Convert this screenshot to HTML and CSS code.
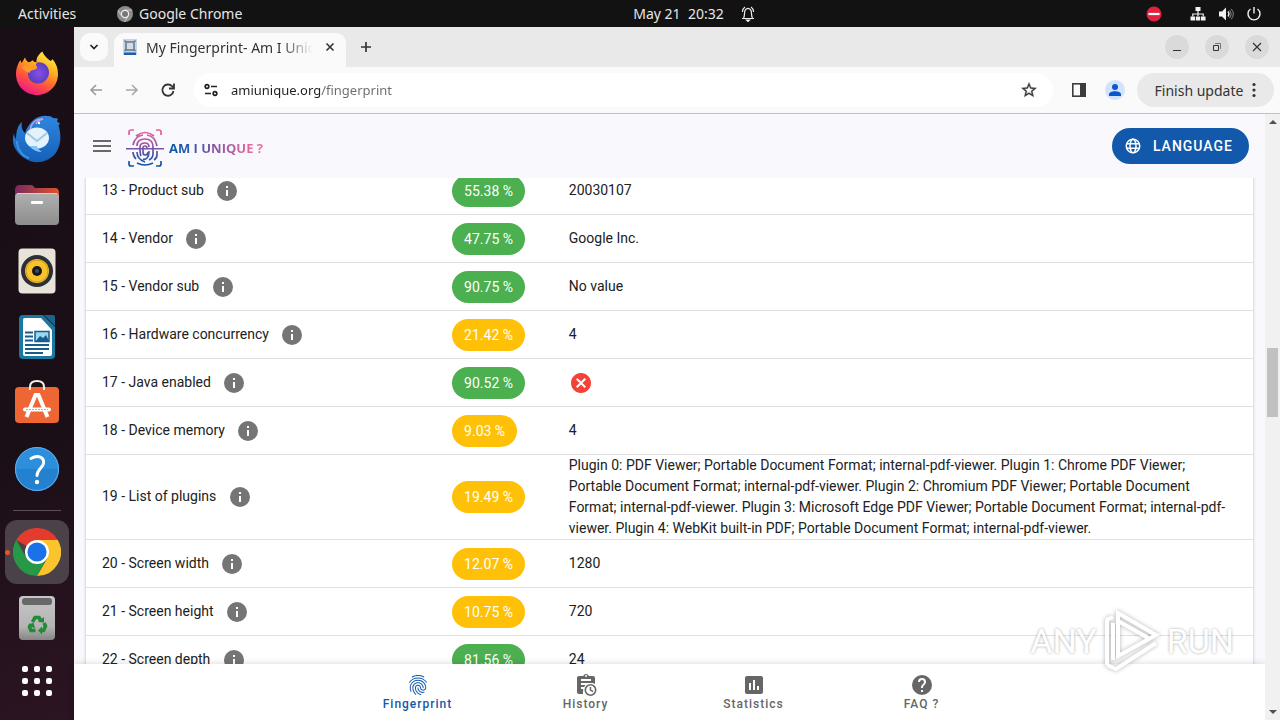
FILE: index.html
```html
<!DOCTYPE html>
<html lang="en">
<head>
<meta charset="utf-8">
<meta name="viewport" content="width=device-width, initial-scale=1">
<title>My Fingerprint- Am I Unique ?</title>
<link rel="stylesheet" href="styles.css">
</head>
<body>
<svg class="defs" aria-hidden="true">
  <defs>
    <symbol id="info" viewBox="0 0 24 24"><path d="M13 9h-2V7h2m0 10h-2v-6h2m-1-9A10 10 0 0 0 2 12a10 10 0 0 0 10 10 10 10 0 0 0 10-10A10 10 0 0 0 12 2z"/></symbol>
    <linearGradient id="gLogo" gradientUnits="userSpaceOnUse" x1="0" y1="0" x2="0" y2="40"><stop offset="0.1" stop-color="#e8609a"/><stop offset="0.5" stop-color="#7c55a5"/><stop offset="0.9" stop-color="#0f57a8"/></linearGradient>
    <linearGradient id="gFox" x1="0.8" y1="0" x2="0.3" y2="1"><stop offset="0" stop-color="#fff44f"/><stop offset="0.35" stop-color="#ffb01f"/><stop offset="0.65" stop-color="#ff5b36"/><stop offset="1" stop-color="#f0148c"/></linearGradient>
    <radialGradient id="gFoxIn"><stop offset="0" stop-color="#8a4de8"/><stop offset="1" stop-color="#5a3fc0"/></radialGradient>
    <linearGradient id="gBird" x1="0" y1="0" x2="0" y2="1"><stop offset="0" stop-color="#2f86e0"/><stop offset="1" stop-color="#1460b8"/></linearGradient>
    <linearGradient id="gFolder" x1="0" y1="0" x2="1" y2="0"><stop offset="0" stop-color="#7a2a5e"/><stop offset="1" stop-color="#e0522c"/></linearGradient>
    <linearGradient id="gGray" x1="0" y1="0" x2="0" y2="1"><stop offset="0" stop-color="#b0b0b0"/><stop offset="1" stop-color="#8c8c8c"/></linearGradient>
    <linearGradient id="gTrash" x1="0" y1="0" x2="0" y2="1"><stop offset="0" stop-color="#c6c6c6"/><stop offset="0.7" stop-color="#b4b4b4"/><stop offset="1" stop-color="#858585"/></linearGradient>
  </defs>
</svg>

<header class="topbar">
  <button class="activities">Activities</button>
  <button class="appmenu">
    <svg width="16" height="16" viewBox="0 0 16 16"><circle cx="8" cy="8" r="8" fill="#8b8b8b"/><path d="M8 4.200h7.200M4.700 9.900 1 4.200M11.200 9.900 7.600 16" stroke="#bcbcbc" stroke-width="1.200"/><circle cx="8" cy="8" r="3.600" fill="#777" stroke="#f2f2f2" stroke-width="1.200"/></svg>
    Google Chrome
  </button>
  <div class="clock"><time>May 21&nbsp; 20:32</time>
    <svg width="14" height="16" viewBox="0 0 14 16" fill="none" stroke="#eee" stroke-width="1.200"><path d="M1 12.500h12M2.500 12C4 10.500 3 7 4 4.500 4.600 3 5.600 2.300 7 2.300s2.400.7 3 2.200c1 2.500 0 6 1.500 7.500M1.400 6C1.500 4 2.500 2 4 1M12.600 6C12.500 4 11.500 2 10 1"/><path d="M5.500 14h3l-1.500 1.500z" fill="#eee"/></svg>
  </div>
  <div class="tray">
    <svg class="dnd" width="16" height="16" viewBox="0 0 16 16"><circle cx="8" cy="8" r="7.500" fill="#e0213f"/><path d="M2.500 8h11" stroke="#fff" stroke-width="2.200"/></svg>
    <svg width="16" height="16" viewBox="0 0 16 16" fill="#f2f2f2"><path d="M5.500 1h5v4h-5zM.500 10.500h4.500v4H.500zM5.800 10.500h4.400v4H5.800zM11 10.500h4.500v4H11z"/><path d="M8 5v5M2.800 10.500V8h10.400v2.500" fill="none" stroke="#f2f2f2" stroke-width="1.200"/></svg>
    <svg width="16" height="16" viewBox="0 0 16 16"><path d="M1 5.500h3L8 1.500v13l-4-4H1z" fill="#f2f2f2"/><path d="M10 5.500q2 2.500 0 5" fill="none" stroke="#f2f2f2" stroke-width="1.300"/><path d="M11.500 4q3.200 4 0 8M13.200 2.800q4.300 5.200 0 10.400" fill="none" stroke="#888"/></svg>
    <svg width="16" height="16" viewBox="0 0 16 16" fill="none" stroke="#f2f2f2" stroke-width="1.400"><path d="M4.500 3a6 6 0 1 0 7 0M8 1v6.500"/></svg>
  </div>
</header>

<div class="desktop">
<nav class="dock" aria-label="Dock">
  <button aria-label="Firefox"><svg width="44" height="46" viewBox="0 0 44 46"><path d="M27.500 1.500c1 4 5 7 8 9.500 1-.5 1.600-1 1.900-2C41 13 43 18 43 24c0 12-9.500 21-21 21S1 36 1 24C1 18 3.300 13 5.500 10c.3 2 .8 2.500 1.200 3C8.500 10.500 9 8.500 10 7.500c1 2.500 2 4 3.500 4.800 2 0 3-1.300 4.500-2 .5 1 1 2 3.500 2C21 7 24.500 3.500 27.500 1.500z" fill="url(#gFox)"/><path d="M22 12.500c7-1 12 4 12 10S29 33.500 23 33.500 13 29 13 24c0-3 0-4 2-5 4 1 6 1 7-1-2-2-1-4 0-5.500z" fill="url(#gFoxIn)"/><path d="M7 17c4-3 8-1.500 14-1.200 2 .5 1.500 2.700-3 4.200-2 .5-3 1-3.500 3C12 22 8 20 7 17z" fill="#ff9a2c"/></svg></button>
  <button aria-label="Thunderbird"><svg width="50" height="48" viewBox="0 0 50 48"><path d="M10 7c-1 5 0 8 3 11C18 4 28 0 35 1c4 0 5 1 6 2l5 .500-1 3 3 2-1.500 2C49 18 50 30 43 39c-8 9-21 11-31 4C2 36-1 27 2 18c0 3 1 5 2 6C4 16 6 10 10 7z" fill="url(#gBird)"/><path d="M18 18C18 8 24 4 31 4c-4 1-6 3-7 5" fill="none" stroke="#c5a2e8" stroke-width="1.500"/><path d="M5 26c0 8 5 15 12 17" fill="none" stroke="#3f93e4" stroke-width="2"/><ellipse cx="25" cy="23" rx="12" ry="10.500" fill="#e3f2fd"/><path d="M15 18l10 8 10-8" fill="none" stroke="#a9c6df" stroke-width="2"/><path d="M17 31c4 4 8 6 13 6-3-2-5-4-5-6z" fill="#82c5f8"/><circle cx="27" cy="8" r="1.200" fill="#fff"/></svg></button>
  <button aria-label="Files"><svg width="46" height="42" viewBox="0 0 46 42"><path d="M1 6q0-5 5-5h11q2 0 3 2l1 1h20q4 0 4 5v10H1z" fill="url(#gFolder)"/><rect x="1" y="9" width="44" height="32" rx="4" fill="url(#gGray)"/><path d="M3 9.500h40" stroke="#d0d0d0"/><rect x="17" y="17" width="12" height="3" rx="1" fill="#fff"/></svg></button>
  <button aria-label="Rhythmbox"><svg width="38" height="46" viewBox="0 0 38 46"><rect x=".5" y=".5" width="37" height="45" rx="4" fill="#e8e3d8"/><circle cx="19" cy="23" r="16" fill="#2a2f38"/><circle cx="19" cy="23" r="12" fill="#f6c32c"/><circle cx="19" cy="23" r="11" fill="none" stroke="#d8961c"/><circle cx="19" cy="23" r="5" fill="#18191d"/><circle cx="19" cy="23" r="2" fill="#454b54"/></svg></button>
  <button aria-label="Writer"><svg width="38" height="46" viewBox="0 0 38 46"><path d="M5 1h20l12 12v28q0 4-4 4H5q-4 0-4-4V5q0-4 4-4z" fill="#1a79a3"/><path d="M7 4h16l11 12v24q0 2-2 2H7q-2 0-2-2V6q0-2 2-2z" fill="#fff"/><path d="M26 1h9q2 0 2 2v9z" fill="#1d6488"/><path d="M7 18.500h8M7 22.500h8M7 26.500h8M7 31h24M7 35h24M7 39h18" stroke="#165d8b" stroke-width="2"/><path d="M17 17.500h14v10H17z" fill="#9bd7f3" stroke="#165d8b" stroke-width="1.500"/><path d="m18 27 4-5 3 2 3-3 3 6z" fill="#165d8b"/></svg></button>
  <button aria-label="Software"><svg width="46" height="46" viewBox="0 0 46 46"><path d="M16 10V7q0-6 7-6t7 6v3" fill="none" stroke="#f3eee7" stroke-width="2"/><rect x="1" y="7" width="44" height="36" rx="4" fill="#ee6634"/><path d="M16 10V7M30 10V7" stroke="#f3eee7" stroke-width="2"/><path d="m12.500 37 9-22h3l9 22" fill="none" stroke="#fff" stroke-width="4"/><path d="M11 29.500h24" stroke="#fff" stroke-width="4" stroke-linecap="round"/><path d="M12 29.500h22" stroke="#ef9f7e" stroke-dasharray="2 1"/></svg></button>
  <button aria-label="Help"><svg width="46" height="46" viewBox="0 0 46 46"><circle cx="23" cy="23" r="22" fill="#2d8edb"/><path d="M1 23a22 22 0 0 0 44 0z" fill="#2481cf"/><circle cx="23" cy="23" r="21.500" fill="none" stroke="#5bb0ee"/><path d="M17 12.500c7-4 13.500-1.500 12.500 5-.8 4.500-6.500 6-6.500 12" fill="none" stroke="#fff" stroke-width="3" stroke-linecap="round"/><circle cx="23" cy="36" r="2.200" fill="#fff"/></svg></button>
  <hr>
  <button class="running" aria-label="Google Chrome"><svg width="48" height="48" viewBox="0 0 48 48"><path d="M24 24 3.200 12A24 24 0 0 1 44.800 12z" fill="#e33b2e"/><path d="M24 12h20.800A24 24 0 0 1 24 48l10.400-18z" fill="#fcc42c"/><path d="M13.600 30 3.200 12A24 24 0 0 0 24 48l10.400-18z" fill="#279847"/><circle cx="24" cy="24" r="12" fill="#fff"/><circle cx="24" cy="24" r="9.600" fill="#1b72e8"/></svg></button>
  <button aria-label="Trash"><svg width="38" height="46" viewBox="0 0 38 46"><rect x="1" y="1" width="36" height="44" rx="4" fill="url(#gTrash)"/><rect x="4" y="3" width="30" height="7" rx="3" fill="#686868"/><g fill="none" stroke="#218b36" stroke-width="3.600"><path d="m14.500 27 2.500-4.500h4l2 3.500"/><path d="m26 28 1.500 3-2 4.500H23"/><path d="M17.500 35.500H13L11.500 32l1.500-3"/></g><g fill="#218b36"><path d="m20 27 6 .500V22zM24 31.500v8l-4-4zM10 30l5.500-2.500 1.500 6z"/></g></svg></button>
  <button class="apps" aria-label="Show applications"><svg width="32" height="32" viewBox="0 0 32 32" fill="#fff"><rect x="1" y="1" width="6" height="6" rx="2"/><rect x="13" y="1" width="6" height="6" rx="2"/><rect x="25" y="1" width="6" height="6" rx="2"/><rect x="1" y="13" width="6" height="6" rx="2"/><rect x="13" y="13" width="6" height="6" rx="2"/><rect x="25" y="13" width="6" height="6" rx="2"/><rect x="1" y="25" width="6" height="6" rx="2"/><rect x="13" y="25" width="6" height="6" rx="2"/><rect x="25" y="25" width="6" height="6" rx="2"/></svg></button>
</nav>

<div class="browser">
  <div class="tabstrip">
    <button class="tabsearch" aria-label="Search tabs"><svg width="10" height="8" viewBox="0 0 10 8"><path d="m1.500 2 3.500 3.500L8.500 2" fill="none" stroke="#222" stroke-width="1.700"/></svg></button>
    <div class="tab">
      <svg width="16" height="16" viewBox="0 0 16 16"><path d="M1 0h14v16H1z" fill="#c7d4e6"/><path d="M4 3h8v8H4zM2.500 1.500l2 2M13.500 1.500l-2 2M2.500 12l2-2M13.500 12l-2-2" fill="#d5dae3" stroke="#66758a" stroke-width="1.500"/><path d="M2 13.500h12V16H2z" fill="#1760ae"/></svg>
      <span class="tabtitle">My Fingerprint- Am I Unique</span>
      <button class="tabclose" aria-label="Close tab"><svg width="10" height="10" viewBox="0 0 10 10"><path d="m1.500 1.500 7 7m0-7-7 7" stroke="#333" stroke-width="1.600"/></svg></button>
    </div>
    <button class="newtab" aria-label="New tab"><svg width="12" height="12" viewBox="0 0 12 12"><path d="M6 1v10M1 6h10" stroke="#333" stroke-width="1.700"/></svg></button>
    <div class="wincontrols">
      <button aria-label="Minimize"><svg width="10" height="10" viewBox="0 0 10 10"><path d="M1 8.500h8" stroke="#333"/></svg></button>
      <button aria-label="Restore"><svg width="10" height="10" viewBox="0 0 10 10" fill="none" stroke="#333"><path d="M1.500 3.500h5v5h-5z"/><path d="M3 1.500h5.500V7" stroke="#777"/></svg></button>
      <button aria-label="Close"><svg width="10" height="10" viewBox="0 0 10 10"><path d="m1 1 8 8m0-8-8 8" stroke="#333" stroke-width="1.200"/></svg></button>
    </div>
  </div>
  <div class="toolbar">
    <button aria-label="Back"><svg width="16" height="16" viewBox="0 0 16 16" fill="none" stroke="#9b9b9b" stroke-width="1.600"><path d="M14 8H3M8 3 3 8l5 5"/></svg></button>
    <button aria-label="Forward"><svg width="16" height="16" viewBox="0 0 16 16" fill="none" stroke="#a8a8a8" stroke-width="1.600"><path d="M2 8h11M8 3l5 5-5 5"/></svg></button>
    <button aria-label="Reload"><svg width="16" height="16" viewBox="0 0 16 16" fill="none" stroke="#333" stroke-width="1.800"><path d="M13.500 9A5.600 5.600 0 1 1 12 4.200l1.500 1.500"/><path d="M14 1.500v5H9"/></svg></button>
    <div class="omnibox">
      <svg width="16" height="16" viewBox="0 0 16 16" fill="none" stroke="#222" stroke-width="1.700"><circle cx="4" cy="4.500" r="1.800"/><path d="M8 4.500h6M2 11.500h6"/><circle cx="12" cy="11.500" r="1.800"/></svg>
      <input type="text" aria-label="Address" value="amiunique.org/fingerprint">
      <button aria-label="Bookmark"><svg width="18" height="18" viewBox="0 0 24 24"><path d="M22 9.240 14.810 8.630 12 2 9.190 8.630 2 9.240 7.450 13.970 5.820 21 12 17.270 18.180 21 16.540 13.970zM12 15.390 8.240 17.660 9.230 13.380 5.910 10.500 10.290 10.130 12 6.090 13.710 10.130 18.090 10.500 14.770 13.380 15.760 17.660z" fill="#3c3c3c" stroke="#3c3c3c" stroke-width=".5" fill-rule="evenodd"/></svg></button>
    </div>
    <button class="panel" aria-label="Side panel"><svg width="16" height="16" viewBox="0 0 16 16"><rect x="1.800" y="1.800" width="12.400" height="12.400" fill="none" stroke="#3c3c3c" stroke-width="1.600"/><path d="M9 1.500h5.500v13H9z" fill="#3c3c3c"/></svg></button>
    <button class="profile" aria-label="Profile"><svg width="14" height="14" viewBox="0 0 14 14" fill="#0b57d0"><circle cx="7" cy="4" r="3"/><path d="M1 13v-1.500C1 9 4 8.200 7 8.200s6 .8 6 3.300V13z"/></svg></button>
    <button class="update">Finish update <svg width="4" height="16" viewBox="0 0 4 16" fill="#333"><circle cx="2" cy="2.500" r="1.600"/><circle cx="2" cy="8" r="1.600"/><circle cx="2" cy="13.500" r="1.600"/></svg></button>
  </div>

  <div class="viewport">
    <div class="page">
      <header class="appbar">
        <button class="menu" aria-label="Menu"><svg width="24" height="24" viewBox="0 0 24 24" fill="#686869"><path d="M3 6h18v2H3zm0 5h18v2H3zm0 5h18v2H3z"/></svg></button>
        <a class="logo" href="#">
          <svg width="38" height="40" viewBox="0 0 38 40" fill="none" stroke="url(#gLogo)" stroke-width="1.700">
            <path d="M3 7V4q0-2 2-2h3M30 2h3q2 0 2 2v3M3 33v3q0 2 2 2h3M30 38h3q2 0 2-2v-3"/>
            <path d="M.500 20.500h37V21H.500z" stroke-width="1.200"/>
            <path d="M10 8Q19 1 28 8M7 17Q9 8 17 7M21 7q8 1 10 11M7 24q0 4 3 7M31 23v4q0 3-3 5M11 18Q11 11 19 11q8 0 8 8v7q0 4-4 6M11 24q0 7 8 10M15 28q-1-2-1-9 0-4 5-4 4 0 4 4M17 31q2 1 4-1 2-2 2-7M22 24q0 3-3 3-2 0-2-3v-4q0-2 2-2t2 2M11 35q8 4 16 0"/>
          </svg>
          <span>AM I UNIQUE ?</span>
        </a>
        <button class="language"><svg width="18" height="18" viewBox="0 0 24 24" fill="none" stroke="#fff" stroke-width="2"><circle cx="12" cy="12" r="9"/><ellipse cx="12" cy="12" rx="4" ry="9"/><path d="M4 9h16M4 15h16"/></svg>LANGUAGE</button>
      </header>
      <main class="content">
        <div class="card">
          <table>
            <colgroup><col class="c-name"><col class="c-ratio"><col></colgroup>
            <tbody>
              <tr><th scope="row">13 - Product sub <svg class="info"><use href="#info"/></svg></th><td><span class="chip green">55.38 %</span></td><td>20030107</td></tr>
              <tr><th scope="row">14 - Vendor <svg class="info"><use href="#info"/></svg></th><td><span class="chip green">47.75 %</span></td><td>Google Inc.</td></tr>
              <tr><th scope="row">15 - Vendor sub <svg class="info"><use href="#info"/></svg></th><td><span class="chip green">90.75 %</span></td><td>No value</td></tr>
              <tr><th scope="row">16 - Hardware concurrency <svg class="info"><use href="#info"/></svg></th><td><span class="chip amber">21.42 %</span></td><td>4</td></tr>
              <tr><th scope="row">17 - Java enabled <svg class="info"><use href="#info"/></svg></th><td><span class="chip green">90.52 %</span></td><td><svg class="no" viewBox="0 0 24 24" role="img" aria-label="No"><path fill="#f44336" d="M12 2C6.470 2 2 6.470 2 12s4.470 10 10 10 10-4.470 10-10S17.530 2 12 2m5 13.590L15.590 17 12 13.410 8.410 17 7 15.590 10.590 12 7 8.410 8.410 7 12 10.590 15.590 7 17 8.410 13.410 12z"/></svg></td></tr>
              <tr><th scope="row">18 - Device memory <svg class="info"><use href="#info"/></svg></th><td><span class="chip amber">9.03 %</span></td><td>4</td></tr>
              <tr><th scope="row">19 - List of plugins <svg class="info"><use href="#info"/></svg></th><td><span class="chip amber">19.49 %</span></td><td>Plugin 0: PDF Viewer; Portable Document Format; internal-pdf-viewer. Plugin 1: Chrome PDF Viewer; Portable Document Format; internal-pdf-viewer. Plugin 2: Chromium PDF Viewer; Portable Document Format; internal-pdf-viewer. Plugin 3: Microsoft Edge PDF Viewer; Portable Document Format; internal-pdf-viewer. Plugin 4: WebKit built-in PDF; Portable Document Format; internal-pdf-viewer.</td></tr>
              <tr><th scope="row">20 - Screen width <svg class="info"><use href="#info"/></svg></th><td><span class="chip amber">12.07 %</span></td><td>1280</td></tr>
              <tr><th scope="row">21 - Screen height <svg class="info"><use href="#info"/></svg></th><td><span class="chip amber">10.75 %</span></td><td>720</td></tr>
              <tr><th scope="row">22 - Screen depth <svg class="info"><use href="#info"/></svg></th><td><span class="chip green">81.56 %</span></td><td>24</td></tr>
            </tbody>
          </table>
        </div>
      </main>
      <nav class="bottomnav">
        <a class="active" href="#"><svg viewBox="0 0 24 24"><path d="M17.810 4.470c-.08 0-.16-.02-.23-.06C15.660 3.420 14 3 12.010 3c-1.980 0-3.860.47-5.570 1.410-.24.13-.54.04-.68-.2-.13-.24-.04-.55.2-.68C7.820 2.520 9.860 2 12.010 2c2.130 0 3.990.47 6.030 1.520.25.13.34.43.21.67-.09.18-.26.28-.44.28zM3.500 9.720c-.1 0-.2-.03-.29-.09-.23-.16-.28-.47-.12-.7.99-1.400 2.250-2.500 3.750-3.270C9.980 4.040 14 4.030 17.150 5.650c1.500.77 2.760 1.860 3.750 3.250.16.22.11.54-.12.7-.23.16-.54.11-.7-.12-.9-1.260-2.040-2.250-3.390-2.940-2.870-1.470-6.540-1.470-9.400.01-1.360.7-2.500 1.700-3.400 2.960-.08.14-.23.21-.39.21zm6.250 12.070c-.13 0-.26-.05-.35-.15-.87-.87-1.340-1.430-2.010-2.640-.69-1.230-1.050-2.730-1.050-4.340 0-2.970 2.540-5.390 5.660-5.390s5.660 2.420 5.660 5.390c0 .28-.22.5-.5.5s-.5-.22-.5-.5c0-2.420-2.090-4.390-4.660-4.390-2.570 0-4.660 1.970-4.660 4.390 0 1.440.32 2.770.93 3.850.64 1.150 1.080 1.640 1.850 2.420.19.2.19.51 0 .71-.11.1-.24.15-.37.15zm7.170-1.850c-1.190 0-2.240-.3-3.100-.89-1.490-1.010-2.380-2.650-2.380-4.390 0-.28.22-.5.5-.5s.5.22.5.5c0 1.410.72 2.740 1.940 3.560.71.48 1.540.71 2.540.71.24 0 .64-.03 1.040-.1.27-.05.53.13.58.41.05.27-.13.53-.41.58-.57.11-1.070.12-1.210.12zM14.910 22c-.04 0-.09-.01-.13-.02-1.590-.44-2.630-1.030-3.720-2.100-1.400-1.390-2.170-3.240-2.170-5.220 0-1.620 1.380-2.940 3.080-2.940 1.700 0 3.080 1.320 3.080 2.940 0 1.070.93 1.940 2.080 1.940s2.080-.87 2.080-1.940c0-3.770-3.250-6.830-7.250-6.830-2.840 0-5.440 1.580-6.610 4.030-.39.81-.59 1.760-.59 2.800 0 .78.07 2.010.67 3.610.1.26-.03.55-.29.64-.26.1-.55-.04-.64-.29-.49-1.310-.73-2.610-.73-3.960 0-1.200.23-2.290.68-3.240 1.330-2.790 4.280-4.600 7.510-4.600 4.550 0 8.250 3.510 8.250 7.830 0 1.620-1.380 2.940-3.080 2.940s-3.080-1.320-3.080-2.940c0-1.070-.93-1.940-2.080-1.940s-2.080.87-2.080 1.940c0 1.710.66 3.310 1.870 4.510.95.94 1.860 1.460 3.270 1.850.27.07.42.35.35.61-.05.23-.26.38-.47.38z"/></svg><span>Fingerprint</span></a>
        <a href="#"><svg viewBox="0 0 24 24"><path d="M5 3h4.200a3 3 0 0 1 5.600 0H19a2 2 0 0 1 2 2v6.100a7 7 0 0 0-4-1.100H7v2h5a7 7 0 0 0-1.600 2H7v2h2.200v2H7v-2H9v5H5a2 2 0 0 1-2-2V5c0-1.100.9-2 2-2zm2 3v2h10V6zm5-4a1 1 0 0 0-1 1 1 1 0 0 0 2 0 1 1 0 0 0-1-1z"/><circle cx="16.500" cy="16.800" r="6.800" fill="#fff"/><path fill-rule="evenodd" d="M16.500 11a6 6 0 1 0 0 12 6 6 0 0 0 0-12m0 1.600a4.400 4.400 0 1 1 0 8.800 4.400 4.400 0 0 1 0-8.800m-.8 1.400v3.600l3 1.700.8-1.200-2.300-1.300V14z"/></svg><span>History</span></a>
        <a href="#"><svg viewBox="0 0 24 24"><path d="M19 3H5c-1.100 0-2 .9-2 2v14c0 1.100.9 2 2 2h14c1.100 0 2-.9 2-2V5c0-1.100-.9-2-2-2M9 17H7v-7h2zm4 0h-2V7h2zm4 0h-2v-4h2z"/></svg><span>Statistics</span></a>
        <a href="#"><svg viewBox="0 0 24 24"><path d="M15.070 11.250 14.170 12.170C13.450 12.890 13 13.500 13 15h-2v-.5c0-1.110.45-2.110 1.170-2.830l1.240-1.260c.37-.36.59-.86.59-1.410a2 2 0 0 0-4 0H8a4 4 0 0 1 8 0c0 .88-.36 1.670-.93 2.250M13 19h-2v-2h2M12 2a10 10 0 1 0 0 20 10 10 0 0 0 0-20z"/></svg><span>FAQ ?</span></a>
      </nav>
    </div>
    <div class="scrollbar" aria-hidden="true"><i class="up"></i><div class="track"><div class="thumb"></div></div><i class="down"></i></div>
  </div>
</div>
</div>

<div class="watermark">
  <span>ANY</span>
  <svg width="58" height="64" viewBox="0 0 58 64" fill="none" stroke="#fff" stroke-width="4"><path d="M15 4v43l38-21zM15 12l32 18M4 11v45M3 11l7-3M4 56l9 4 40-26M10 51V14"/></svg>
  <span>RUN</span>
</div>
</body>
</html>
```

FILE: styles.css
```css
* { box-sizing: border-box; }

body {
  margin: 0;
  height: 100vh;
  display: flex;
  flex-direction: column;
  overflow: hidden;
  font-family: "Noto Sans", "Open Sans", sans-serif;
  font-size: 14px;
}

button {
  margin: 0;
  padding: 0;
  border: 0;
  background: none;
  font: inherit;
  color: inherit;
  display: flex;
  align-items: center;
  justify-content: center;
}

svg { flex: none; }
.defs { position: absolute; width: 0; height: 0; }

/* system bar */
.topbar {
  flex: none;
  height: 27px;
  padding: 0 18px;
  display: grid;
  grid-template-columns: 1fr auto 1fr;
  grid-template-areas: "left clock tray";
  align-items: center;
  background: #121212;
  color: #e6e6e6;
}
.activities { grid-area: left; justify-self: start; }
.appmenu { grid-area: left; justify-self: start; margin-left: 99px; gap: 6px; }
.clock { grid-area: clock; display: flex; align-items: center; gap: 17px; margin-left: 108px; }
.tray { grid-area: tray; justify-self: end; display: flex; align-items: center; gap: 12px; }
.dnd { margin-right: 16px; }

.desktop { flex: 1; min-height: 0; display: flex; }

/* dock */
.dock {
  flex: none;
  width: 74px;
  padding-top: 13px;
  display: flex;
  flex-direction: column;
  background: linear-gradient(160deg, #190e15 0%, #1b0f17 60%, #2c1423 100%);
}
.dock button { height: 66px; flex: none; }
.dock hr { width: 48px; height: 1px; margin: 8px auto; border: 0; background: #5a5056; }
.dock .running {
  position: relative;
  width: 64px;
  height: 64px;
  margin: 1px 5px;
  border-radius: 12px;
  background: #4b4148;
}
.running::before {
  content: "";
  position: absolute;
  left: 0;
  width: 5px;
  height: 5px;
  border-radius: 50%;
  background: #e95420;
}
.dock .apps { height: 60px; }

/* browser window */
.browser { flex: 1; min-width: 0; display: flex; flex-direction: column; background: #fafafa; }
.tabstrip {
  flex: none;
  height: 40px;
  padding: 0 11px 0 6px;
  display: flex;
  align-items: center;
  background: #e9e9e9;
  color: #333;
}
.tabsearch { width: 28px; height: 28px; border-radius: 10px; background: #fafafa; }
.tab {
  align-self: flex-end;
  width: 232px;
  height: 34px;
  margin-left: 6px;
  padding: 0 10px 6px 8px;
  display: flex;
  align-items: center;
  gap: 8px;
  border-radius: 10px 10px 0 0;
  background: #fafafa;
}
.tabtitle {
  flex: 1;
  overflow: hidden;
  white-space: nowrap;
  -webkit-mask-image: linear-gradient(90deg, #000 80%, transparent 98%);
  mask-image: linear-gradient(90deg, #000 80%, transparent 98%);
}
.tabclose { width: 12px; height: 16px; }
.newtab { width: 28px; height: 28px; margin-left: 6px; }
.wincontrols { margin-left: auto; display: flex; gap: 16px; }
.wincontrols button { width: 24px; height: 24px; border-radius: 50%; background: #dadada; }

.toolbar {
  flex: none;
  height: 47px;
  padding: 0 6px 0 4px;
  display: flex;
  align-items: center;
  border-bottom: 1px solid #bfc2c4;
}
.toolbar button { width: 36px; height: 34px; }
.omnibox {
  flex: 1;
  min-width: 0;
  height: 34px;
  margin-left: 8px;
  padding: 0 6px 0 9px;
  display: flex;
  align-items: center;
  border-radius: 17px;
  background: #fff;
}
.omnibox input {
  flex: 1;
  min-width: 0;
  margin-left: 12px;
  padding: 0;
  border: 0;
  outline: 0;
  font: inherit;
  font-size: 13px;
  color: transparent;
  background: linear-gradient(90deg, #1f1f1f 89px, #6b6b6b 89px);
  -webkit-background-clip: text;
  background-clip: text;
}
.toolbar .panel { margin-left: 8px; }
.toolbar .profile { width: 20px; height: 20px; margin: 0 12px 0 8px; border-radius: 50%; background: #d3e3fd; }
.toolbar .update { width: 137px; gap: 9px; border-radius: 17px; background: #e9e9e9; color: #333; }

.viewport { flex: 1; min-height: 0; display: flex; }
.page {
  flex: 1;
  min-width: 0;
  display: flex;
  flex-direction: column;
  background: #f8f8fd;
  font-family: Roboto, sans-serif;
}

/* site header */
.appbar {
  flex: none;
  height: 64px;
  padding: 0 16px;
  display: flex;
  align-items: center;
}
.logo { margin-left: 12px; padding-top: 4px; display: flex; align-items: center; gap: 5px; text-decoration: none; }
.logo span {
  font: bold 13px/20px "Open Sans", sans-serif;
  color: transparent;
  background: linear-gradient(90deg, #0f57a8 10%, #7c55a5 45%, #f0689c 90%);
  -webkit-background-clip: text;
  background-clip: text;
}
.language {
  height: 36px;
  margin-left: auto;
  padding: 0 16px 0 12px;
  gap: 11px;
  border-radius: 18px;
  background: #1259ab;
  color: #fff;
  font-size: 14px;
  font-weight: 500;
  letter-spacing: 1px;
}

/* results */
.content { flex: 1; min-height: 0; overflow: hidden; padding: 0 12px; }
.card {
  margin-top: -11px;
  background: #fff;
  box-shadow: 0 1px 3px rgba(0, 0, 0, .25);
}
table { width: 100%; border-collapse: separate; border-spacing: 0; table-layout: fixed; }
.c-name { width: 30%; }
.c-ratio { width: 10%; }
th, td {
  height: 48px;
  padding: 0 16px;
  border-bottom: 1px solid #e0e0e0;
  font-size: 14px;
  font-weight: 400;
  line-height: 21px;
  text-align: left;
  vertical-align: middle;
  color: #212121;
}
.info { width: 24px; height: 24px; margin-left: 8px; vertical-align: middle; fill: #757575; }
.no { display: block; width: 24px; height: 24px; }
.chip {
  display: inline-block;
  height: 32px;
  padding: 0 12px;
  border-radius: 16px;
  line-height: 32px;
  vertical-align: middle;
  color: #fff;
}
.green { background: #4caf50; }
.amber { background: #ffc107; }

.bottomnav {
  flex: none;
  z-index: 1;
  height: 56px;
  display: flex;
  justify-content: center;
  background: #fff;
  box-shadow: 0 1px 8px rgba(0, 0, 0, .2);
}
.bottomnav a {
  width: 168px;
  display: flex;
  flex-direction: column;
  align-items: center;
  justify-content: center;
  color: #666;
  fill: #666;
  font-size: 12px;
  font-weight: 500;
  line-height: 14px;
  letter-spacing: 1px;
  text-decoration: none;
}
.bottomnav svg { width: 24px; height: 24px; }
.bottomnav .active { color: #1259ab; fill: #1259ab; }

.scrollbar {
  flex: none;
  z-index: 2;
  width: 15px;
  display: flex;
  flex-direction: column;
  align-items: center;
  padding: 6px 0;
  background: #f1f1f1;
}
.scrollbar i { border: 4px solid transparent; }
.scrollbar .up { border-bottom-color: #505050; border-top: 0; margin: 0 0 5px; }
.scrollbar .down { border-top-color: #505050; border-bottom: 0; margin: 5px 0 0; }
.track { flex: 1; width: 11px; padding-top: 219px; }
.thumb { height: 69px; background: #c1c1c1; }

/* capture service mark */
.watermark {
  position: absolute;
  right: 46px;
  bottom: 47px;
  z-index: 3;
  display: flex;
  align-items: center;
  gap: 6px;
  color: #fff;
  font: 34px/60px "Roboto", sans-serif;
  text-shadow: 0 0 3px rgba(0, 0, 0, .35);
  pointer-events: none;
}
.watermark svg { filter: drop-shadow(0 0 2px rgba(0, 0, 0, .3)); }
```
